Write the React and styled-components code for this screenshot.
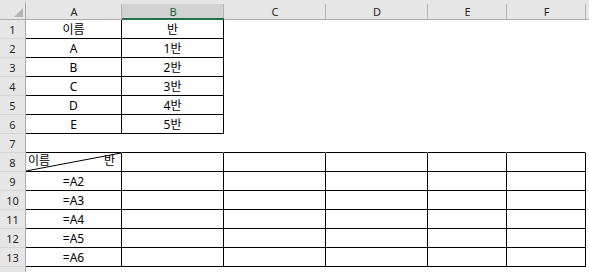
import React from 'react'
import styled, { createGlobalStyle } from 'styled-components'

const GlobalStyle = createGlobalStyle`
    html, body {
        margin: 0;
        padding: 0;
        background: #fff;
    }
`;

const cols = ['A', 'B', 'C', 'D', 'E', 'F']

const topTable = [
    ['이름', '반'],
    ['A', '1반'],
    ['B', '2반'],
    ['C', '3반'],
    ['D', '4반'],
    ['E', '5반'],
]

const formulas = ['=A2', '=A3', '=A4', '=A5', '=A6']

// every cell only draws its bottom and right edge, like the sheet grid
function buildRows() {
    const rows = []
    topTable.forEach((r) => {
        rows.push(cols.map((c, i) => ({
            text: r[i] || '',
            bottom: i < 2,
            right: i < 2,
        })))
    })
    // row 7 carries the top edge of the second table
    rows.push(cols.map(() => ({ text: '', bottom: true, right: false })))
    rows.push(cols.map((c, i) => ({ text: '', bottom: true, right: true, diag: i === 0 })))
    formulas.forEach((f) => {
        rows.push(cols.map((c, i) => ({ text: i === 0 ? f : '', bottom: true, right: true })))
    })
    return rows
}

function Sheet() {
    const rows = buildRows()
    return (
        <Grid>
            <Corner>
                <svg width="9" height="9" viewBox="0 0 9 9">
                    <polygon points="9,0 9,9 0,9" fill="#b5b5b5" />
                </svg>
            </Corner>
            {cols.map((c) => (
                <ColHead key={c} $active={c === 'B'}>{c}</ColHead>
            ))}
            <ColHead $rest />
            {rows.map((row, r) => (
                <React.Fragment key={r}>
                    <RowHead>{r + 1}</RowHead>
                    {row.map((cell, i) => (
                        <Cell key={i} $bottom={cell.bottom} $right={cell.right}>
                            {cell.diag ? (
                                <>
                                    <Diagonal viewBox="0 0 95 18" preserveAspectRatio="none">
                                        <line x1="0" y1="18" x2="95" y2="0" stroke="#000" strokeWidth="1" />
                                    </Diagonal>
                                    <DiagText>
                                        <span>이름</span>
                                        <span>반</span>
                                    </DiagText>
                                </>
                            ) : cell.text}
                        </Cell>
                    ))}
                    <Cell />
                </React.Fragment>
            ))}
            <RowHead $last />
            {cols.map((c) => <Cell key={c} />)}
            <Cell />
        </Grid>
    )
}

export default function App() {
    return (
        <>
            <GlobalStyle />
            <Sheet />
        </>
    )
}

const Grid = styled.div`
    display: grid;
    grid-template-columns: 26px 96px 102px 102px 102px 79px 79px 1fr;
    grid-template-rows: 20px repeat(13, 19px) 6px;
    width: 589px;
    height: 272px;
    overflow: hidden;
    font-family: "Noto Sans", "Noto Sans CJK KR", sans-serif;
`;

const HeadBase = styled.div`
    position: relative;
    box-sizing: border-box;
    background: #e6e6e6;
    color: #262626;
    font-size: 11px;
    display: flex;
    align-items: center;
    justify-content: center;
`;

const Corner = styled(HeadBase)`
    border-bottom: 1px solid #ababab;
    border-right: 1px solid #ababab;
    border-top: 4px solid #e6e6e6;
    align-items: flex-end;
    justify-content: flex-end;
    padding: 0 2px 2px 0;
`;

const ColHead = styled(HeadBase)`
    padding-top: 4px;
    border-bottom: ${p => p.$active ? '2px solid #217346' : '1px solid #ababab'};
    background: linear-gradient(#e6e6e6 0 4px, ${p => p.$active ? '#d2d2d2' : '#e6e6e6'} 4px);
    color: ${p => p.$active ? '#1d5a3a' : '#262626'};
    &:after {
        content: "";
        display: ${p => p.$rest ? 'none' : 'block'};
        position: absolute;
        right: 0;
        top: 4px;
        bottom: 0;
        width: 1px;
        background: #b4b4b4;
    }
`;

const RowHead = styled(HeadBase)`
    border-right: 1px solid #ababab;
    border-bottom: ${p => p.$last ? 'none' : '1px solid #d5d5d5'};
    padding-top: 1px;
`;

const Cell = styled.div`
    position: relative;
    box-sizing: border-box;
    display: flex;
    align-items: center;
    justify-content: center;
    font-size: 12px;
    color: #000;
    white-space: nowrap;
    border-bottom: 1px solid ${p => p.$bottom ? '#000' : 'transparent'};
    border-right: 1px solid ${p => p.$right ? '#000' : 'transparent'};
`;

const Diagonal = styled.svg`
    position: absolute;
    left: 0;
    top: 0;
    width: 100%;
    height: 100%;
`;

const DiagText = styled.div`
    position: relative;
    flex: 1;
    align-self: stretch;
    display: flex;
    justify-content: space-between;
    align-items: flex-start;
    padding: 0 6px 0 2px;
    line-height: 15px;
`;
